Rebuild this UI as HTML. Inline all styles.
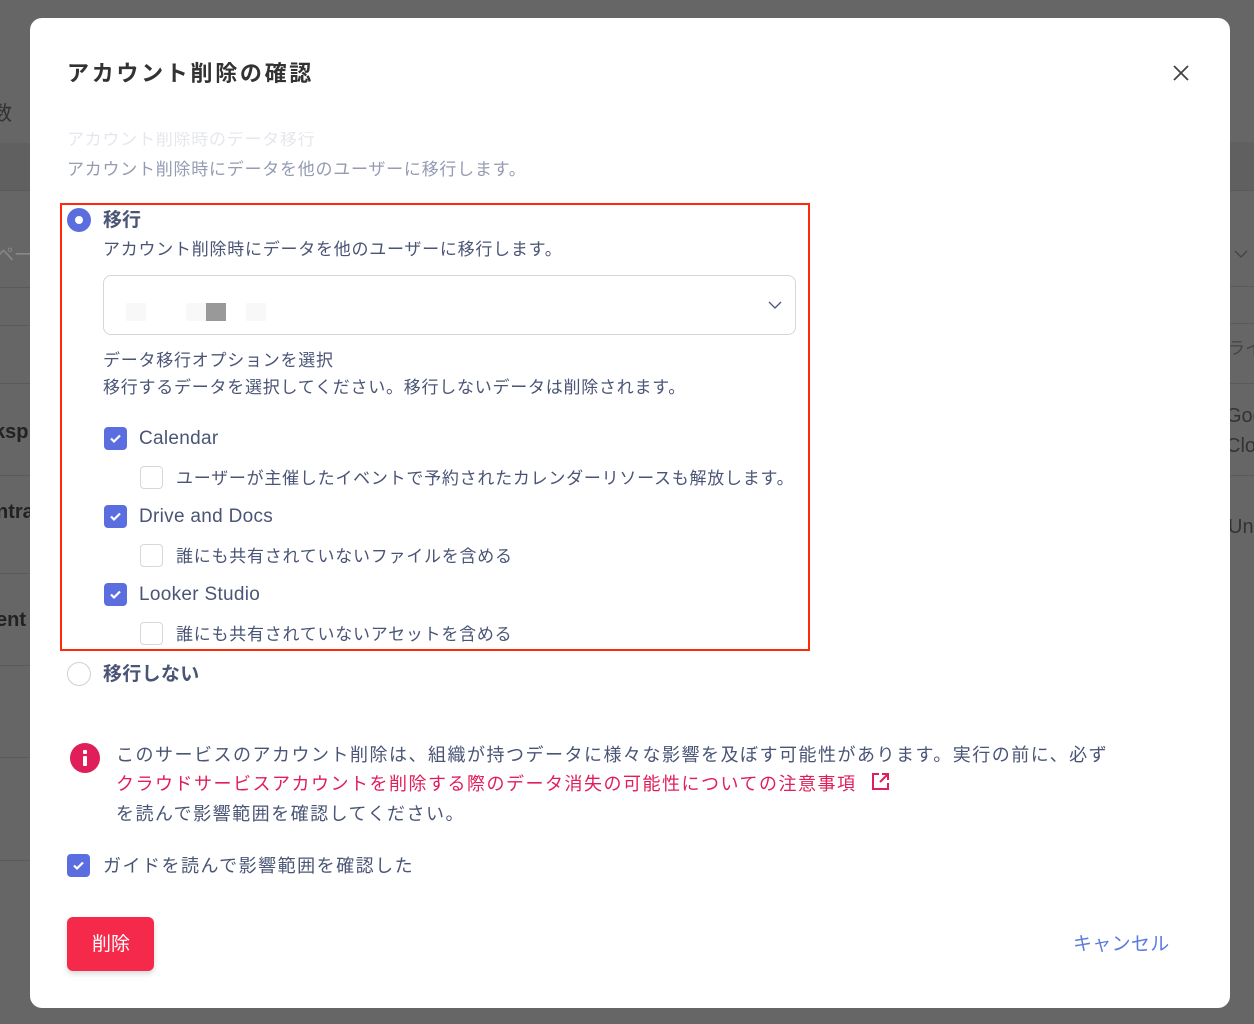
<!DOCTYPE html>
<html><head><meta charset="utf-8"><style>
*{margin:0;padding:0;box-sizing:border-box}
body{width:1254px;height:1024px;overflow:hidden;background:#666;font-family:"Liberation Sans","Noto Sans CJK JP",sans-serif;position:relative;color:#4a5576}
.a{position:absolute;white-space:nowrap;line-height:1}
.t{font-size:17px;letter-spacing:0.75px}
.t2{font-size:18px;letter-spacing:1.5px}
.modal{position:absolute;left:30px;top:18px;width:1200px;height:990px;background:#fff;border-radius:12px}
.cb{position:absolute;width:23px;height:23px;border-radius:4px;background:#5b6ee0}
.cb svg{position:absolute;left:5px;top:6px}
.ub{position:absolute;width:23px;height:23px;border-radius:4px;border:1px solid #d8d8dc;background:#fff}
.ln{position:absolute;left:0;width:30px;height:1px;background:#5a5a5a}
.rn{position:absolute;left:1230px;width:24px;height:1px;background:#5a5a5a}
</style></head><body>
<div class="ln" style="top:143px"></div><div class="ln" style="top:190px"></div><div class="ln" style="top:287px"></div><div class="ln" style="top:325px"></div><div class="ln" style="top:383px"></div><div class="ln" style="top:475px"></div><div class="ln" style="top:573px"></div><div class="ln" style="top:665px"></div><div class="ln" style="top:757px"></div><div class="ln" style="top:860px"></div>
<div style="position:absolute;left:0;top:143px;width:30px;height:47px;background:#606060"></div>
<div class="a" style="left:-8px;top:104px;font-size:20px;color:#333">数</div>
<div class="a" style="left:-4px;top:246px;font-size:18px;color:#888">ペー</div>
<div class="a" style="left:-6px;top:422px;font-size:20px;font-weight:bold;color:#222">ksp</div>
<div class="a" style="left:-4px;top:502px;font-size:20px;font-weight:bold;color:#222">ntra</div>
<div class="a" style="left:-4px;top:610px;font-size:20px;font-weight:bold;color:#222">ent</div>
<div class="rn" style="top:142px"></div><div class="rn" style="top:190px"></div><div class="rn" style="top:286px"></div><div class="rn" style="top:323px"></div><div class="rn" style="top:383px"></div><div class="rn" style="top:475px"></div>
<div style="position:absolute;left:1230px;top:142px;width:24px;height:48px;background:#606060"></div>
<div class="a" style="left:1228px;top:340px;font-size:17px;color:#444">ライ</div>
<div class="a" style="left:1226px;top:406px;font-size:20px;color:#333">Goo</div>
<div class="a" style="left:1226px;top:436px;font-size:20px;color:#333">Clo</div>
<div class="a" style="left:1228px;top:517px;font-size:20px;color:#333">Unl</div>
<svg class="a" style="left:1233px;top:248px" width="16" height="12"><path d="M2 3l6 6 6-6" fill="none" stroke="#444" stroke-width="1.3"/></svg>

<div class="modal"></div>
<div class="a" style="left:67px;top:63px;font-size:22px;font-weight:bold;color:#333;letter-spacing:2.7px">アカウント削除の確認</div>
<svg class="a" style="left:1172px;top:64px" width="18" height="18"><path d="M2 2L16 16M16 2L2 16" stroke="#444" stroke-width="1.8"/></svg>

<div style="position:absolute;left:60px;top:132px;width:400px;height:20px;overflow:hidden"><div class="a t" style="left:7px;top:-1px;color:#e6e7ee">アカウント削除時のデータ移行</div></div>
<div class="a t" style="left:67px;top:161px;color:#959bb2">アカウント削除時にデータを他のユーザーに移行します。</div>

<div style="position:absolute;left:60px;top:203px;width:750px;height:448px;border:2px solid #ff2a0a"></div>
<div style="position:absolute;left:67px;top:208px;width:24px;height:24px;border-radius:50%;background:#5b6ee0"><div style="position:absolute;left:8px;top:8px;width:8px;height:8px;border-radius:50%;background:#fff"></div></div>
<div class="a" style="left:103px;top:211px;font-size:19px;font-weight:bold;color:#4a5576">移行</div>
<div class="a t" style="left:103px;top:241px">アカウント削除時にデータを他のユーザーに移行します。</div>
<div style="position:absolute;left:103px;top:275px;width:693px;height:60px;border:1px solid #d6d6da;border-radius:8px"></div>
<div style="position:absolute;left:126px;top:303px;width:20px;height:18px;background:#f8f8f8"></div>
<div style="position:absolute;left:186px;top:303px;width:20px;height:18px;background:#f8f8f8"></div>
<div style="position:absolute;left:206px;top:303px;width:20px;height:18px;background:#999"></div>
<div style="position:absolute;left:246px;top:303px;width:20px;height:18px;background:#f8f8f8"></div>
<svg class="a" style="left:767px;top:300px" width="16" height="10"><path d="M2 2l6 6 6-6" fill="none" stroke="#4a5576" stroke-width="1.3"/></svg>
<div class="a t" style="left:103px;top:352px">データ移行オプションを選択</div>
<div class="a t" style="left:103px;top:379px">移行するデータを選択してください。移行しないデータは削除されます。</div>

<div class="cb" style="left:104px;top:427px"><svg width="13" height="11"><path d="M2 5.5l3 3 6-6" fill="none" stroke="#fff" stroke-width="2.2"/></svg></div>
<div class="a" style="left:139px;top:429px;font-size:19px;letter-spacing:0.3px">Calendar</div>
<div class="ub" style="left:140px;top:466px"></div>
<div class="a t" style="left:176px;top:470px">ユーザーが主催したイベントで予約されたカレンダーリソースも解放します。</div>
<div class="cb" style="left:104px;top:505px"><svg width="13" height="11"><path d="M2 5.5l3 3 6-6" fill="none" stroke="#fff" stroke-width="2.2"/></svg></div>
<div class="a" style="left:139px;top:507px;font-size:19px;letter-spacing:0.3px">Drive and Docs</div>
<div class="ub" style="left:140px;top:544px"></div>
<div class="a t" style="left:176px;top:548px">誰にも共有されていないファイルを含める</div>
<div class="cb" style="left:104px;top:583px"><svg width="13" height="11"><path d="M2 5.5l3 3 6-6" fill="none" stroke="#fff" stroke-width="2.2"/></svg></div>
<div class="a" style="left:139px;top:585px;font-size:19px;letter-spacing:0.3px">Looker Studio</div>
<div class="ub" style="left:140px;top:622px"></div>
<div class="a t" style="left:176px;top:626px">誰にも共有されていないアセットを含める</div>

<div style="position:absolute;left:67px;top:662px;width:24px;height:24px;border-radius:50%;border:1px solid #d0d0d4"></div>
<div class="a" style="left:103px;top:665px;font-size:19px;font-weight:bold;letter-spacing:0.3px">移行しない</div>

<div style="position:absolute;left:70px;top:743px;width:30px;height:30px;border-radius:50%;background:#e01e5a"><div style="position:absolute;left:13px;top:7px;width:4px;height:4px;background:#fff;border-radius:1px"></div><div style="position:absolute;left:13px;top:13px;width:4px;height:10px;background:#fff;border-radius:1px"></div></div>
<div class="a t2" style="left:116px;top:746px">このサービスのアカウント削除は、組織が持つデータに様々な影響を及ぼす可能性があります。実行の前に、必ず</div>
<div class="a t2" style="left:116px;top:775px;color:#e01e5a">クラウドサービスアカウントを削除する際のデータ消失の可能性についての注意事項</div>
<svg class="a" style="left:871px;top:772px" width="19" height="19"><path d="M8 2H2v15h15v-6" fill="none" stroke="#e01e5a" stroke-width="2"/><path d="M11 2h6v6M17 2L9 10" fill="none" stroke="#e01e5a" stroke-width="2"/></svg>
<div class="a t2" style="left:116px;top:805px">を読んで影響範囲を確認してください。</div>

<div class="cb" style="left:67px;top:854px"><svg width="13" height="11"><path d="M2 5.5l3 3 6-6" fill="none" stroke="#fff" stroke-width="2.2"/></svg></div>
<div class="a t2" style="left:103px;top:857px">ガイドを読んで影響範囲を確認した</div>

<div style="position:absolute;left:67px;top:917px;width:87px;height:54px;border-radius:6px;background:#f5294a;box-shadow:0 3px 6px rgba(0,0,0,.15)"></div>
<div class="a" style="left:92px;top:935px;font-size:19px;color:#fff">削除</div>
<div class="a" style="left:1073px;top:935px;font-size:19px;color:#5b7be0;letter-spacing:0.3px">キャンセル</div>
</body></html>
